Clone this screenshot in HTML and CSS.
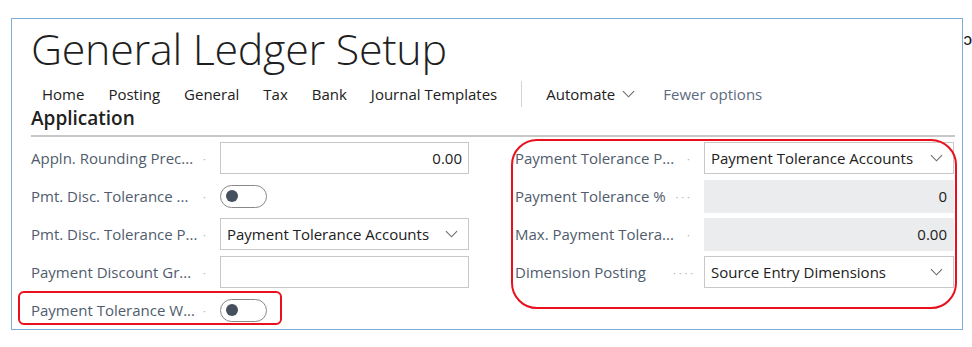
FILE: index.html
```html
<!DOCTYPE html>
<html lang="en">
<head>
    <meta charset="UTF-8">
    <title>General Ledger Setup</title>
    <link rel="stylesheet" href="styles.css">
</head>
<body>

    <div class="page">
        <div class="frame">
            <h1 class="title">General Ledger Setup</h1>

            <nav class="actions">
                <span class="action">Home</span>
                <span class="action">Posting</span>
                <span class="action">General</span>
                <span class="action">Tax</span>
                <span class="action">Bank</span>
                <span class="action">Journal Templates</span>
                <span class="divider"></span>
                <span class="action">Automate
                    <svg class="chev small" viewBox="0 0 14 8"><path d="M1 1l6 6 6-6" /></svg>
                </span>
                <span class="action muted">Fewer options</span>
            </nav>

            <h2 class="group-title">Application</h2>

            <div class="fields">
                <div class="col">
                    <div class="row">
                        <span class="label">Appln. Rounding Prec...</span>
                        <span class="dots">·</span>
                        <div class="box num">0.00</div>
                    </div>
                    <div class="row">
                        <span class="label">Pmt. Disc. Tolerance ...</span>
                        <span class="dots">·</span>
                        <div class="toggle"><span class="knob"></span></div>
                    </div>
                    <div class="row">
                        <span class="label">Pmt. Disc. Tolerance P...</span>
                        <span class="dots">·</span>
                        <div class="box select">Payment Tolerance Accounts
                            <svg class="chev" viewBox="0 0 14 8"><path d="M1 1l6 6 6-6" /></svg>
                        </div>
                    </div>
                    <div class="row">
                        <span class="label">Payment Discount Gr...</span>
                        <span class="dots">·</span>
                        <div class="box"></div>
                    </div>
                    <div class="row">
                        <span class="label">Payment Tolerance W...</span>
                        <span class="dots">·</span>
                        <div class="toggle"><span class="knob"></span></div>
                    </div>
                </div>

                <div class="col">
                    <div class="row">
                        <span class="label">Payment Tolerance P...</span>
                        <span class="dots">·</span>
                        <div class="box select">Payment Tolerance Accounts
                            <svg class="chev" viewBox="0 0 14 8"><path d="M1 1l6 6 6-6" /></svg>
                        </div>
                    </div>
                    <div class="row">
                        <span class="label">Payment Tolerance %</span>
                        <span class="dots">· · ·</span>
                        <div class="box num readonly">0</div>
                    </div>
                    <div class="row">
                        <span class="label">Max. Payment Tolera...</span>
                        <span class="dots">·</span>
                        <div class="box num readonly">0.00</div>
                    </div>
                    <div class="row">
                        <span class="label">Dimension Posting</span>
                        <span class="dots">· · · ·</span>
                        <div class="box select">Source Entry Dimensions
                            <svg class="chev" viewBox="0 0 14 8"><path d="M1 1l6 6 6-6" /></svg>
                        </div>
                    </div>
                </div>
            </div>

            <!-- red highlight marks drawn over the form -->
            <div class="mark mark-left"></div>
            <div class="mark mark-right"></div>
        </div>
        <div class="stray">ɔ</div>
    </div>

</body>
</html>
```

FILE: styles.css
```css
body {
    margin: 0;
    background: #fff;
    font-family: 'Open Sans', sans-serif;
    color: #212121;
}

.page {
    display: flex;
    align-items: flex-start;
    padding: 18px 0 0 11px;
}

.frame {
    position: relative;
    width: 952px;
    height: 312px;
    box-sizing: border-box;
    border: 1px solid #7eaed8;
    padding: 0 7px 0 19px;
}

.title {
    margin: 8px 0 0;
    font-size: 43px;
    line-height: 43px;
    font-weight: 300;
    letter-spacing: -0.3px;
    color: #1f1f1f;
}

.actions {
    display: flex;
    align-items: center;
    gap: 24px;
    height: 30px;
    margin-top: 9px;
    padding-left: 11px;
    font-size: 15px;
}

.action {
    display: flex;
    align-items: center;
    gap: 7px;
    white-space: nowrap;
}

.action.muted {
    color: #5d6b7f;
    margin-left: 4px;
}

.divider {
    width: 1px;
    height: 26px;
    background: #d4d4d4;
}

.chev {
    width: 13px;
    height: 8px;
    fill: none;
    stroke: #6b6b6b;
    stroke-width: 1.2;
}

.group-title {
    margin: -4px 0 0;
    font-size: 19px;
    font-weight: 600;
    line-height: 26px;
    padding-bottom: 4px;
    border-bottom: 2px solid #c8c8c8;
}

.fields {
    display: grid;
    grid-template-columns: 438px 439px;
    column-gap: 46px;
    margin-top: 2px;
}

.row {
    display: flex;
    align-items: center;
    height: 38px;
}

.label {
    width: 172px;
    font-size: 15px;
    color: #505c6d;
    white-space: nowrap;
    overflow: hidden;
}

.dots {
    width: 17px;
    text-align: right;
    padding-right: 14px;
    box-sizing: content-box;
    margin-left: -14px;
    font-size: 11px;
    color: #b0b0b0;
    white-space: nowrap;
}

.box {
    flex: 1;
    height: 32px;
    box-sizing: border-box;
    border: 1px solid #c8c8c8;
    display: flex;
    align-items: center;
    padding: 0 6px;
    font-size: 15px;
    color: #212121;
}

.box.num {
    justify-content: flex-end;
}

.box.readonly {
    background: #ebeced;
    border-color: #ebeced;
    height: 33px;
}

.box.select {
    justify-content: space-between;
    padding-right: 10px;
}

.toggle {
    width: 47px;
    height: 23px;
    box-sizing: border-box;
    border: 1px solid #8a8886;
    border-radius: 12px;
    display: flex;
    align-items: center;
    padding-left: 5px;
}

.knob {
    width: 12px;
    height: 12px;
    border-radius: 50%;
    background: #454f5e;
}

.mark {
    position: absolute;
    border: 2px solid #e8101c;
    box-sizing: border-box;
}

.mark-left {
    left: 6px;
    top: 272px;
    width: 264px;
    height: 34px;
    border-radius: 6px;
}

.mark-right {
    left: 499px;
    top: 120px;
    width: 446px;
    height: 170px;
    border-radius: 26px;
}

.stray {
    margin-top: 9px;
    margin-left: 1px;
    font-size: 17px;
    line-height: 24px;
    color: #111;
}
```
